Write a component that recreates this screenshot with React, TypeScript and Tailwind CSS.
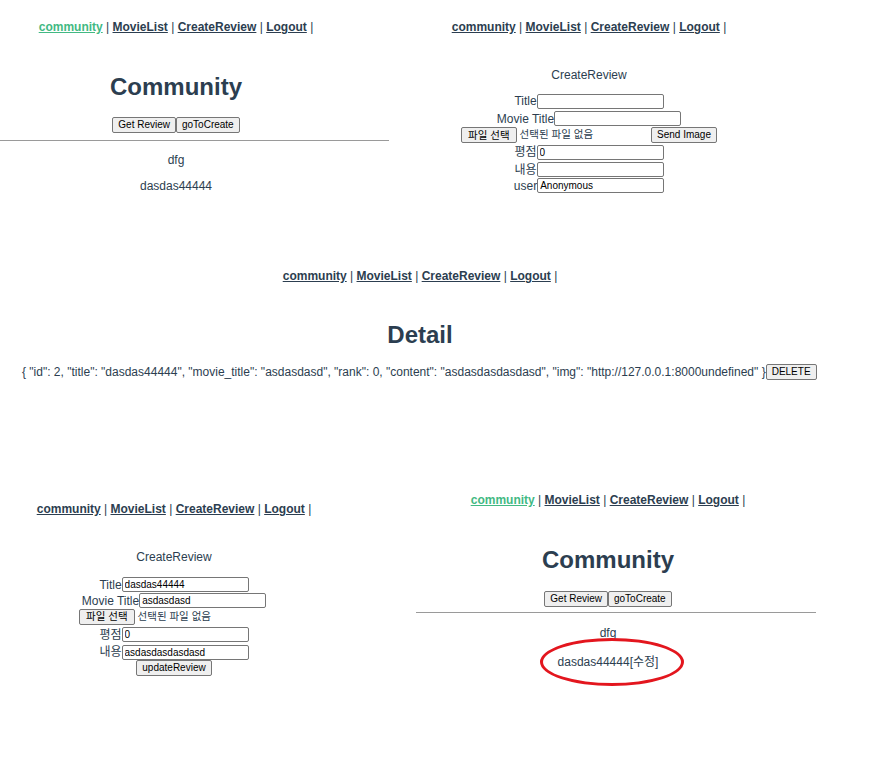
import type { ReactNode } from 'react';

const Nav = ({ active }: { active?: boolean }) => (
    <div className="h-[14px] leading-[14px] text-[12px] text-[#2c3e50] whitespace-nowrap">
        <a className={active ? 'font-bold underline text-[#42b983]' : 'font-bold underline'}>community</a> |{' '}
        <a className="font-bold underline">MovieList</a> | <a className="font-bold underline">CreateReview</a> |{' '}
        <a className="font-bold underline">Logout</a> |
    </div>
);

const Btn = ({ children, wide }: { children: ReactNode; wide?: boolean }) => (
    <button
        className={
            wide
                ? 'h-[16px] px-[6px] bg-[#efefef] border border-[#767676] rounded-[2px] text-[10.5px] leading-none text-black whitespace-nowrap'
                : 'h-[16px] px-[5px] bg-[#efefef] border border-[#767676] rounded-[2px] text-[10px] leading-none text-black whitespace-nowrap'
        }
    >
        {children}
    </button>
);

const Field = ({ value }: { value?: string }) => (
    <input
        readOnly
        defaultValue={value ?? ''}
        className="w-[127px] h-[15px] border border-[#767676] rounded-[2px] px-[2px] text-[10px] leading-none text-black bg-white outline-none"
    />
);

const Row = ({ label, value, h }: { label: string; value?: string; h: string }) => (
    <div className={`flex items-center justify-center ${h}`}>
        <span className="leading-[14px]">{label}</span>
        <Field value={value} />
    </div>
);

const FileInput = () => (
    <div className="w-[190px] flex items-center text-left">
        <Btn wide>파일 선택</Btn>
        <span className="ml-[3px] text-[10.5px] text-[#2c3e50]">선택된 파일 없음</span>
    </div>
);

const Community = () => <h1 className="text-[24px] leading-[28px] font-bold">Community</h1>;

export default function App() {
    return (
        <div className="w-[880px] h-[764px] bg-white overflow-hidden text-[#2c3e50] text-[12px] font-['Liberation_Sans','Noto_Sans_CJK_KR',sans-serif]">
            {/* top row */}
            <div className="flex h-[210px]">
                <div className="w-[389px]">
                    <div className="w-[352px] flex flex-col items-center pt-[20px]">
                        <Nav active />
                        <div className="mt-[39px]">
                            <Community />
                        </div>
                        <div className="mt-[16px] flex">
                            <Btn>Get Review</Btn>
                            <Btn>goToCreate</Btn>
                        </div>
                    </div>
                    <div className="mt-[7px] border-t border-[#9a9a9a]" />
                    <div className="w-[352px] text-center">
                        <div className="mt-[12px] leading-[14px]">dfg</div>
                        <div className="mt-[12px] leading-[14px]">dasdas44444</div>
                    </div>
                </div>
                <div className="w-[400px] flex flex-col items-center pt-[20px]">
                    <Nav />
                    <div className="mt-[34px] leading-[14px]">CreateReview</div>
                    <div className="mt-[10px] w-full">
                        <Row label="Title" h="h-[18px]" />
                        <Row label="Movie Title" h="h-[17px]" />
                        <div className="flex items-center justify-center h-[16px]">
                            <FileInput />
                            <Btn>Send Image</Btn>
                        </div>
                        <Row label="평점" value="0" h="h-[18px]" />
                        <Row label="내용" h="h-[17px]" />
                        <Row label="user" value="Anonymous" h="h-[15px]" />
                    </div>
                </div>
            </div>

            {/* detail */}
            <div className="h-[270px] pt-[59px] flex flex-col">
                <div className="w-[840px] flex flex-col items-center">
                    <Nav />
                    <h1 className="mt-[38px] text-[24px] leading-[28px] font-bold">Detail</h1>
                </div>
                <div className="mt-[15px] pl-[22px] h-[16px] flex items-center whitespace-nowrap">
                    <span>
                        {'{ "id": 2, "title": "dasdas44444", "movie_title": "asdasdasd", "rank": 0, "content": "asdasdasdasdasd", "img": "http://127.0.0.1:8000undefined" }'}
                    </span>
                    <Btn>DELETE</Btn>
                </div>
            </div>

            {/* bottom row */}
            <div className="flex">
                <div className="w-[416px]">
                    <div className="w-[348px] flex flex-col items-center pt-[22px]">
                        <Nav />
                        <div className="mt-[34px] leading-[14px]">CreateReview</div>
                        <div className="mt-[12px] w-full">
                            <Row label="Title" value="dasdas44444" h="h-[17px]" />
                            <Row label="Movie Title" value="asdasdasd" h="h-[15px]" />
                            <div className="flex items-center justify-center h-[17px]">
                                <FileInput />
                            </div>
                            <Row label="평점" value="0" h="h-[19px]" />
                            <Row label="내용" value="asdasdasdasdasd" h="h-[16px]" />
                            <div className="flex items-center justify-center h-[16px]">
                                <Btn>updateReview</Btn>
                            </div>
                        </div>
                    </div>
                </div>
                <div className="w-[400px]">
                    <div className="w-[384px] flex flex-col items-center pt-[13px]">
                        <Nav active />
                        <div className="mt-[39px]">
                            <Community />
                        </div>
                        <div className="mt-[17px] flex">
                            <Btn>Get Review</Btn>
                            <Btn>goToCreate</Btn>
                        </div>
                    </div>
                    <div className="mt-[5px] border-t border-[#9a9a9a]" />
                    <div className="w-[384px] flex flex-col items-center">
                        <div className="mt-[13px] leading-[14px]">dfg</div>
                        <div className="mt-[15px] leading-[14px] relative">
                            dasdas44444[수정]
                            <div className="absolute left-[-18px] top-[-17px] w-[144px] h-[48px] rounded-[50%] border-[3px] border-[#e3161e]" />
                        </div>
                    </div>
                </div>
            </div>
        </div>
    );
}
